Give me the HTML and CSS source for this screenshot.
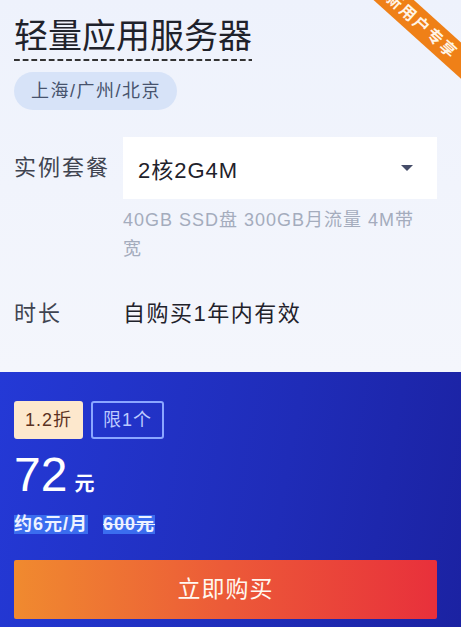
FILE: index.html
```html
<!DOCTYPE html>
<html lang="zh-CN">
<head>
  <meta charset="UTF-8" />
  <meta name="viewport" content="width=device-width, initial-scale=1" />
  <link rel="stylesheet" href="styles.css">
</head>
<body>

  <div class="card">
    <div class="ribbon">新用户专享</div>

    <div class="top">
      <h1 class="title">轻量应用服务器</h1>
      <div><span class="region">上海/广州/北京</span></div>

      <div class="row">
        <span class="label label-tall">实例套餐</span>
        <div class="field">
          <div class="select">
            <span>2核2G4M</span>
            <i class="caret"></i>
          </div>
          <p class="desc">40GB SSD盘 300GB月流量 4M带宽</p>
        </div>
      </div>

      <div class="row row-time">
        <span class="label">时长</span>
        <span class="value">自购买1年内有效</span>
      </div>
    </div>

    <div class="bottom">
      <div class="tags">
        <span class="tag tag-off">1.2折</span>
        <span class="tag tag-limit">限1个</span>
      </div>
      <div class="price">
        <span class="num">72</span>
        <span class="unit">元</span>
      </div>
      <div class="sub">
        <span class="hl">约6元/月</span>
        <span class="hl old">600元</span>
      </div>
      <a class="buy" href="#">立即购买</a>
    </div>
  </div>

</body>
</html>
```

FILE: styles.css
```css
html, body {
  margin: 0;
  padding: 0;
  width: 100%;
  height: 100%;
  overflow: hidden;
  font-family: "Liberation Sans", "Noto Sans CJK SC", sans-serif;
}

.card {
  position: relative; /* for the ribbon */
  overflow: hidden;
  height: 100%;
  display: flex;
  flex-direction: column;
}

.ribbon {
  position: absolute;
  left: 342px;
  top: 12px;
  width: 160px;
  height: 27px;
  line-height: 27px;
  text-align: center;
  background: #ef8017;
  color: #fff4e6;
  font-size: 16px;
  font-weight: 700;
  letter-spacing: 2px;
  transform: rotate(42deg);
}

.top {
  background: linear-gradient(180deg, #eef2fc 0%, #f4f6fc 100%);
  padding: 16px 24px 43px 14px;
}

.title {
  display: inline-block;
  margin: 0;
  font-size: 34px;
  line-height: 40px;
  font-weight: 400;
  color: #1f222b;
  padding-bottom: 5px;
  background-image: linear-gradient(to right, #333 62%, transparent 0);
  background-size: 8.7px 2px;
  background-repeat: repeat-x;
  background-position: left bottom;
}

.region {
  display: inline-block;
  margin-top: 11px;
  height: 38px;
  line-height: 38px;
  padding: 0 16px 0 17px;
  border-radius: 19px;
  background: #d7e3f8;
  color: #47536e;
  font-size: 18px;
  letter-spacing: 1.5px;
}

.row {
  display: flex;
  margin-top: 27px;
}

.label {
  width: 109px;
  flex: none;
  font-size: 22px;
  letter-spacing: 2px;
  color: #404450;
}

.label-tall {
  line-height: 62px;
}

.field {
  flex: 1;
}

.select {
  height: 62px;
  background: #fff;
  display: flex;
  align-items: center;
  justify-content: space-between;
  padding: 0 24px 0 15px;
  font-size: 22px;
  letter-spacing: 1px;
  color: #1f222b;
}

.caret {
  width: 0;
  height: 0;
  border-left: 6px solid transparent;
  border-right: 6px solid transparent;
  border-top: 6px solid #454c68;
}

.desc {
  margin: 7px 0 0;
  max-width: 306px;
  font-size: 18px;
  letter-spacing: 1px;
  line-height: 29px;
  color: #a4acbd;
}

.row-time {
  margin-top: 35px;
  line-height: 30px;
}

.value {
  font-size: 22px;
  letter-spacing: 1.5px;
  color: #1f222b;
}

.bottom {
  flex: 1;
  background: linear-gradient(100deg, #2439d6 0%, #1f2cb8 60%, #1b22a2 100%);
  padding: 29px 24px 0 14px;
}

.tags {
  display: flex;
  gap: 8px;
}

.tag {
  height: 34px;
  line-height: 34px;
  border: 2px solid transparent;
  border-radius: 3px;
  padding: 0 9px;
  font-size: 18px;
  letter-spacing: 1px;
}

.tag-off {
  background: #fde8cd;
  border-color: #fde8cd;
  color: #5b3222;
}

.tag-limit {
  border-color: #8ba6ff;
  color: #bccaff;
  padding: 0 10px;
}

.price {
  display: flex;
  align-items: baseline;
  gap: 7px;
  margin-top: 12px;
  color: #fff;
}

.num {
  font-size: 48px;
  line-height: 1;
}

.unit {
  font-size: 20px;
  font-weight: 700;
}

.sub {
  display: flex;
  gap: 15px;
  margin-top: 16px;
}

.hl {
  display: inline-block;
  height: 19px;
  line-height: 19px;
  background: #3b6def;
  color: #eef2ff;
  font-size: 18px;
  font-weight: 700;
  letter-spacing: 1px;
}

.old {
  text-decoration: line-through;
}

.buy {
  display: block;
  margin-top: 26px;
  height: 59px;
  line-height: 59px;
  text-align: center;
  border-radius: 2px;
  background: linear-gradient(90deg, #f08a2f 0%, #ec5a38 50%, #e8303b 100%);
  color: #fff8f0;
  font-size: 23px;
  letter-spacing: 1px;
  text-decoration: none;
}
```
